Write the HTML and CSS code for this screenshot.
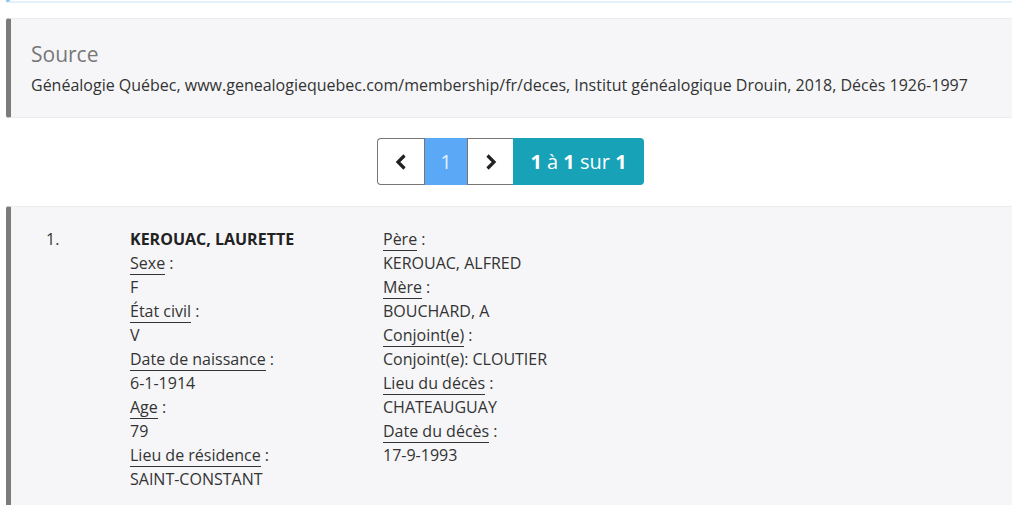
FILE: index.html
```html
<!DOCTYPE html>
<html lang="fr">
<head>
<meta charset="utf-8">
<title>Décès</title>
<link rel="stylesheet" href="styles.css">
</head>
<body>
<div class="page">
  <div class="prev-box"></div>
  <section class="source">
    <h2 class="source-title">Source</h2>
    <p class="source-text">Généalogie Québec, www.genealogiequebec.com/membership/fr/deces, Institut généalogique Drouin, 2018, Décès 1926-1997</p>
  </section>
  <nav class="pager-row">
    <div class="pager">
      <a class="pg pg-prev" href="#"><svg width="14" height="18" viewBox="0 0 14 18"><path d="M10.5 2.5 L4 9 L10.5 15.5" fill="none" stroke="#222" stroke-width="3.2"/></svg></a>
      <span class="pg pg-active">1</span>
      <a class="pg pg-next" href="#"><svg width="14" height="18" viewBox="0 0 14 18"><path d="M3.5 2.5 L10 9 L3.5 15.5" fill="none" stroke="#222" stroke-width="3.2"/></svg></a>
      <span class="pg pg-info"><b>1</b> à <b>1</b> sur <b>1</b></span>
    </div>
  </nav>
  <section class="result">
    <div class="num">1.</div>
    <div class="col col-a">
      <div class="name">KEROUAC, LAURETTE</div>
      <div><span class="lbl">Sexe</span> :</div>
      <div>F</div>
      <div><span class="lbl">État civil</span> :</div>
      <div>V</div>
      <div><span class="lbl">Date de naissance</span> :</div>
      <div>6-1-1914</div>
      <div><span class="lbl">Age</span> :</div>
      <div>79</div>
      <div><span class="lbl">Lieu de résidence</span> :</div>
      <div>SAINT-CONSTANT</div>
    </div>
    <div class="col col-b">
      <div><span class="lbl">Père</span> :</div>
      <div>KEROUAC, ALFRED</div>
      <div><span class="lbl">Mère</span> :</div>
      <div>BOUCHARD, A</div>
      <div><span class="lbl">Conjoint(e)</span> :</div>
      <div>Conjoint(e): CLOUTIER</div>
      <div><span class="lbl">Lieu du décès</span> :</div>
      <div>CHATEAUGUAY</div>
      <div><span class="lbl">Date du décès</span> :</div>
      <div>17-9-1993</div>
    </div>
  </section>
</div>
</body>
</html>
```
FILE: styles.css
```css
html, body {
  margin: 0;
  padding: 0;
  background: #ffffff;
}
body {
  font-family: "Open Sans", "Liberation Sans", sans-serif;
  font-size: 16px;
  line-height: 24px;
  color: #333333;
  overflow: hidden;
}
.page {
  padding-left: 6px;
}
.prev-box {
  height: 1px;
  border-bottom: 2px solid #e2f1fa;
  border-left: 4px solid #8cc6e8;
  border-bottom-left-radius: 3px;
  margin-bottom: 15px;
}
.source {
  background: #f6f6f8;
  border-top: 1px solid #ececef;
  border-bottom: 1px solid #ececef;
  border-left: 5px solid #7b7b7b;
  border-radius: 3px 0 0 3px;
  padding: 20px 20px 20px 20px;
  margin-right: -10px;
}
.source-title {
  margin: 0 0 4px;
  font-size: 21px;
  line-height: 30px;
  font-weight: 400;
  color: #777777;
}
.source-text {
  margin: 0;
  font-size: 16px;
  line-height: 24px;
  color: #333333;
}
.pager-row {
  display: flex;
  justify-content: center;
  padding: 20px 0 21px 3px;
}
.pager {
  display: flex;
  height: 47px;
}
.pg {
  display: flex;
  align-items: center;
  justify-content: center;
  text-decoration: none;
  box-sizing: border-box;
  height: 47px;
}
.pg-prev {
  width: 47px;
  border: 1px solid #767676;
  border-right: none;
  border-radius: 4px 0 0 4px;
  background: #ffffff;
}
.pg-active {
  width: 43px;
  background: #5aa8f6;
  color: #e3f0ff;
  font-size: 20px;
  border-left: 1px solid #767676;
}
.pg-next {
  width: 46px;
  border: 1px solid #767676;
  border-right: none;
  background: #ffffff;
}
.pg-info {
  width: 131px;
  background: #17a2b8;
  color: #ffffff;
  font-size: 20px;
  font-weight: 500;
  border-radius: 0 4px 4px 0;
  white-space: pre;
}
.pg-info b {
  font-weight: 700;
}
.result {
  display: flex;
  background: #f6f6f8;
  border-top: 1px solid #ececef;
  border-left: 5px solid #7b7b7b;
  border-radius: 3px 0 0 0;
  padding: 20px 0 30px 35px;
  margin-right: -10px;
}
.num {
  width: 84px;
}
.col-a {
  width: 253px;
}
.name {
  font-weight: 700;
  color: #222222;
}
.lbl {
  border-bottom: 1px solid #333333;
}
```
